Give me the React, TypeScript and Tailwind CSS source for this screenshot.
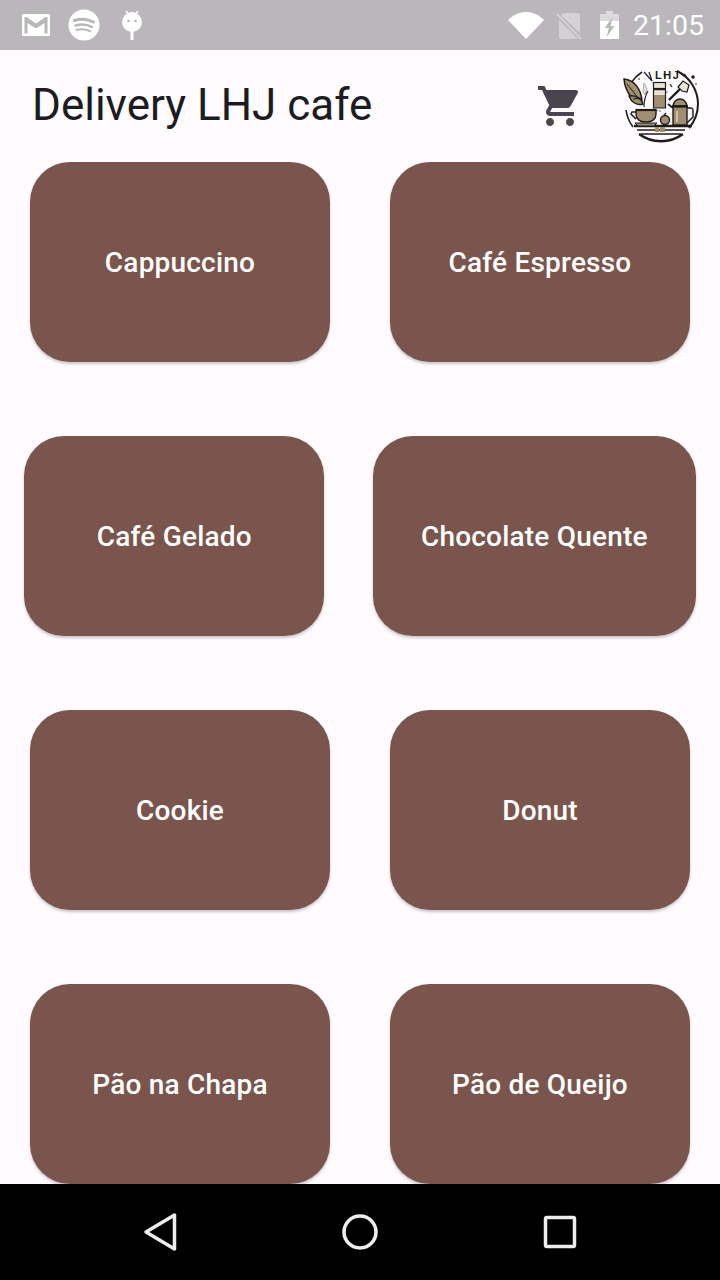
const ITEMS = [
  ['Cappuccino', 'Café Espresso'],
  ['Café Gelado', 'Chocolate Quente'],
  ['Cookie', 'Donut'],
  ['Pão na Chapa', 'Pão de Queijo'],
]

function GmailIcon() {
  return (
    <svg width="28" height="22" viewBox="0 0 28 22" className="absolute left-[22px] top-[14px]">
      <path fill="#fff" fillRule="evenodd" d="M1.5 0h25A1.5 1.5 0 0 1 28 1.500v19a1.500 1.500 0 0 1-1.500 1.500h-25A1.500 1.500 0 0 1 0 20.500v-19A1.500 1.500 0 0 1 1.500 0zM2.500 3v16.500h3V9L14 14.500 22.500 9v10.500h3V3h-2L14 9.500 4.500 3z" />
    </svg>
  )
}

function SpotifyIcon() {
  return (
    <svg width="32" height="32" viewBox="0 0 32 32" className="absolute left-[68px] top-[9px]">
      <circle cx="16" cy="16" r="15.500" fill="#fff" />
      <g fill="none" stroke="#b9b7b9" strokeLinecap="round">
        <path d="M6.500 11.500c6-1.800 13.500-1.300 19 1.500" strokeWidth="3" />
        <path d="M7.500 16.500c5.500-1.500 12-1 16.500 1.500" strokeWidth="2.500" />
        <path d="M8.500 21c4.500-1.100 10-.8 13.500 1.300" strokeWidth="2" />
      </g>
    </svg>
  )
}

function AndroidLollipop() {
  return (
    <svg width="22" height="32" viewBox="0 0 22 32" className="absolute left-[121px] top-[9px]">
      <path d="M5 2l3 4M17 2l-3 4" stroke="#fff" strokeWidth="1.500" />
      <circle cx="11" cy="13" r="10" fill="#fff" />
      <circle cx="7.500" cy="12" r="1.300" fill="#b9b7b9" />
      <circle cx="14.500" cy="12" r="1.300" fill="#b9b7b9" />
      <rect x="9.500" y="22" width="3" height="9" fill="#fff" />
    </svg>
  )
}

function StatusRight() {
  return (
    <>
      <svg width="36" height="28" viewBox="0 0 36 28" className="absolute left-[508px] top-[11px]">
        <path fill="#fff" d="M0 9C5 4 11 1 18 1s13 3 18 8L18 28z" />
      </svg>
      <svg width="28" height="30" viewBox="0 0 28 30" className="absolute left-[555px] top-[11px]">
        <path fill="#d3d1d3" d="M9 2h14a2 2 0 0 1 2 2v18L6 4.500A3 3 0 0 1 9 2zM4 9l19 19H6a2 2 0 0 1-2-2z" />
        <path d="M2 3l24 25" stroke="#d3d1d3" strokeWidth="2" />
      </svg>
      <svg width="20" height="28" viewBox="0 0 20 28" className="absolute left-[600px] top-[11px]">
        <path fill="#dcdadc" d="M6 0h7v3h5a1 1 0 0 1 1 1v6H0V4a1 1 0 0 1 1-1h5z" />
        <path fill="#fff" fillRule="evenodd" d="M0 10h19v17a1 1 0 0 1-1 1H1a1 1 0 0 1-1-1zM12 7L5 17h4l-2 8 7-10h-4z" />
        <path fill="#b9b7b9" d="M12.500 6L5 17h4l-2 8.500L14.500 15h-4z" />
      </svg>
    </>
  )
}

function CartIcon() {
  return (
    <svg width="48" height="48" viewBox="0 0 24 24" fill="#49454f">
      <path d="M7 18c-1.100 0-1.990.9-1.990 2S5.900 22 7 22s2-.9 2-2-.9-2-2-2zM1 2v2h2l3.600 7.590-1.350 2.450c-.16.28-.25.61-.25.960 0 1.100.9 2 2 2h12v-2H7.420c-.14 0-.25-.11-.25-.25l.03-.12.9-1.630h7.450c.75 0 1.410-.41 1.750-1.030l3.580-6.490A1 1 0 0 0 20.010 4H5.210l-.94-2H1zm16 16c-1.100 0-1.990.9-1.990 2s.89 2 1.990 2 2-.9 2-2-.9-2-2-2z" />
    </svg>
  )
}

function LogoIcon() {
  const ink = '#1f1c1a'
  const tan = '#a08e70'
  const pale = '#e9e3d6'
  return (
    <svg width="86" height="80" viewBox="0 0 86 80">
      {/* ring */}
      <path d="M59 7a37 37 0 0 1 21 33 37 37 0 0 1-9 24" fill="none" stroke={ink} strokeWidth="2" />
      <path d="M24 8A37 37 0 0 0 13 19" fill="none" stroke={ink} strokeWidth="1.600" />
      <path d="M8 46a37 37 0 0 0 7 17" fill="none" stroke={ink} strokeWidth="1.600" />
      <path d="M21 70a37 37 0 0 0 44 0" fill="none" stroke={ink} strokeWidth="2.400" />
      {/* lines under the table */}
      <path d="M16 62h58" stroke={ink} strokeWidth="2.400" />
      <path d="M19 66h48M23 70h40" stroke={ink} strokeWidth="1.500" />
      {/* leaves */}
      <path d="M6 15c10 1 18 10 18 24C14 37 7 27 6 15z" fill={tan} stroke={ink} strokeWidth="1.500" />
      <path d="M9 20c4 5 9 11 14 18" fill="none" stroke={ink} strokeWidth="1" />
      <path d="M11 32c6-1 12 2 14 8-6 2-12-2-14-8z" fill={tan} stroke={ink} strokeWidth="1.400" />
      <path d="M26 43c0-6 1-11 4-16" fill="none" stroke={ink} strokeWidth="1.200" />
      <path d="M26 19l-1 8 2 4 2-6z" fill={pale} stroke="#999" strokeWidth="0.800" />
      {/* tin */}
      <rect x="35.500" y="18.500" width="12" height="6" fill={pale} stroke={ink} strokeWidth="1.200" />
      <rect x="35" y="24" width="13" height="2.500" fill={ink} />
      <rect x="36" y="26.500" width="11" height="5" fill={pale} />
      <rect x="36" y="31" width="11" height="13" fill={tan} />
      <path d="M35.500 26v18h12V26" fill="none" stroke={ink} strokeWidth="1.200" />
      {/* scoop */}
      <path d="M51 36l11-11" stroke={ink} strokeWidth="2.400" />
      <path d="M60 23l5-6 6 4-2 7-5-1z" fill={pale} stroke={ink} strokeWidth="1.200" />
      <circle cx="49" cy="28" r="0.900" fill={tan} />
      <path d="M52 20l2 3M46 10l1 3M66 10l2 2" stroke={ink} strokeWidth="1.200" />
      {/* pot */}
      <path d="M55 42c1-5 4-7 7-7s6 2 7 7z" fill={tan} stroke={ink} strokeWidth="1.400" />
      <rect x="54" y="41" width="16" height="2.500" fill={ink} />
      <rect x="55" y="43" width="14" height="18" fill={tan} stroke={ink} strokeWidth="1.400" />
      <path d="M59 47v11" stroke={pale} strokeWidth="1.200" />
      <path d="M69 44h4c2 0 2 1 2 3v6l-6 6" fill="none" stroke={ink} strokeWidth="1.500" />
      <path d="M55 44l-5-4" stroke={ink} strokeWidth="1.800" />
      {/* cup */}
      <path d="M18 46h20v4c0 5-4 8-9 8h-2c-5 0-9-3-9-8z" fill={tan} stroke={ink} strokeWidth="1.400" />
      <path d="M18 46h20" stroke={ink} strokeWidth="2.200" />
      <path d="M18 48h-4l-1 2 5 5" fill="none" stroke={ink} strokeWidth="1.500" />
      <path d="M17 59h22l-3 3H20z" fill={tan} stroke={ink} strokeWidth="1" />
      <path d="M23 34l-8 1" stroke={ink} strokeWidth="1" />
      {/* fruit and crumbs */}
      <circle cx="47" cy="56" r="4.500" fill={tan} stroke={ink} strokeWidth="1.400" />
      <path d="M46 51l2-2" stroke={ink} strokeWidth="1.200" />
      <rect x="37" y="63" width="4" height="5" fill={tan} />
      <rect x="42" y="63" width="5" height="5" fill={tan} />
      <circle cx="75" cy="13" r="1.800" fill={ink} />
      <circle cx="78" cy="20" r="0.800" fill={ink} />
      <circle cx="21" cy="15" r="0.800" fill={ink} />
      <circle cx="39" cy="46.500" r="0.700" fill={ink} />
      <circle cx="42" cy="47" r="0.700" fill={ink} />
      {/* top letters */}
      <path d="M26 8l8 9M31 8l3 9" stroke={ink} strokeWidth="1.200" />
      <text x="37" y="15" fontFamily="'Liberation Sans', sans-serif" fontSize="11" fontWeight="700" letterSpacing="1.500" fill={ink}>LHJ</text>
    </svg>
  )
}

function MenuButton({ label }: { label: string }) {
  return (
    <button
      type="button"
      className="h-[200px] min-w-[300px] shrink-0 rounded-[40px] bg-[#79554e] px-12 pt-[2px] text-[28px] font-medium tracking-[0.2px] text-white shadow-[0_2px_3px_rgba(0,0,0,0.22)]"
    >
      {label}
    </button>
  )
}

export default function App() {
  return (
    <div className="flex h-[1280px] w-[720px] flex-col overflow-hidden bg-[#fffbfe] font-['Roboto',sans-serif]">
      {/* Status bar */}
      <div className="relative h-[50px] shrink-0 bg-[#b9b7b9]">
        <GmailIcon />
        <SpotifyIcon />
        <AndroidLollipop />
        <StatusRight />
        <span className="absolute right-[16px] top-[9px] text-[28.5px] leading-[34px] text-white">21:05</span>
      </div>

      {/* App bar */}
      <div className="flex h-[112px] shrink-0 items-center">
        <h1 className="ml-[32px] flex-1 pb-[2px] text-[44px] font-normal leading-[56px] text-[#1c1b1f]">Delivery LHJ cafe</h1>
        <div className="mr-[34px] flex h-[48px] w-[48px] items-center justify-center">
          <CartIcon />
        </div>
        <div className="mb-[4px] mr-[16px] h-[80px] w-[86px]">
          <LogoIcon />
        </div>
      </div>

      {/* Product grid */}
      <div className="flex min-h-0 flex-1 flex-col gap-[74px] overflow-hidden">
        {ITEMS.map(row => (
          <div key={row[0]} className="flex justify-around">
            {row.map(item => (
              <MenuButton key={item} label={item} />
            ))}
          </div>
        ))}
      </div>

      {/* Navigation bar */}
      <div className="flex h-[96px] shrink-0 items-center justify-center gap-[144px] bg-black">
        <svg width="56" height="56" viewBox="0 0 56 56">
          <path d="M42.500 11v34L14 28z" fill="none" stroke="#eee" strokeWidth="3.500" strokeLinejoin="round" />
        </svg>
        <svg width="56" height="56" viewBox="0 0 56 56">
          <circle cx="28" cy="28" r="16" fill="none" stroke="#eee" strokeWidth="3.500" />
        </svg>
        <svg width="56" height="56" viewBox="0 0 56 56">
          <rect x="13.500" y="13.500" width="29" height="29" rx="1.500" fill="none" stroke="#eee" strokeWidth="3.500" />
        </svg>
      </div>
    </div>
  )
}
